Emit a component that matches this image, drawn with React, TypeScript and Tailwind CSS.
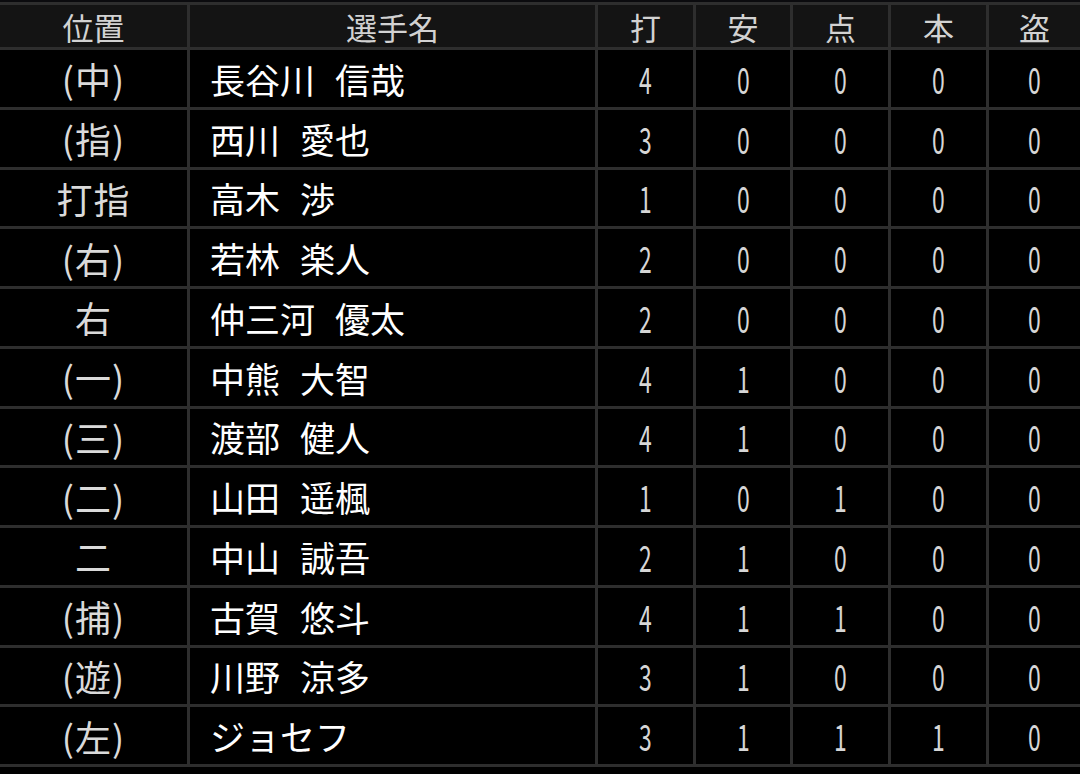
import React from 'react'

type Row = {
  pos: string
  name: string
  ab: number
  h: number
  rbi: number
  hr: number
  sb: number
}

const rows: Row[] = [
  { pos: '(中)', name: '長谷川 信哉', ab: 4, h: 0, rbi: 0, hr: 0, sb: 0 },
  { pos: '(指)', name: '西川 愛也', ab: 3, h: 0, rbi: 0, hr: 0, sb: 0 },
  { pos: '打指', name: '高木 渉', ab: 1, h: 0, rbi: 0, hr: 0, sb: 0 },
  { pos: '(右)', name: '若林 楽人', ab: 2, h: 0, rbi: 0, hr: 0, sb: 0 },
  { pos: '右', name: '仲三河 優太', ab: 2, h: 0, rbi: 0, hr: 0, sb: 0 },
  { pos: '(一)', name: '中熊 大智', ab: 4, h: 1, rbi: 0, hr: 0, sb: 0 },
  { pos: '(三)', name: '渡部 健人', ab: 4, h: 1, rbi: 0, hr: 0, sb: 0 },
  { pos: '(二)', name: '山田 遥楓', ab: 1, h: 0, rbi: 1, hr: 0, sb: 0 },
  { pos: '二', name: '中山 誠吾', ab: 2, h: 1, rbi: 0, hr: 0, sb: 0 },
  { pos: '(捕)', name: '古賀 悠斗', ab: 4, h: 1, rbi: 1, hr: 0, sb: 0 },
  { pos: '(遊)', name: '川野 涼多', ab: 3, h: 1, rbi: 0, hr: 0, sb: 0 },
  { pos: '(左)', name: 'ジョセフ', ab: 3, h: 1, rbi: 1, hr: 1, sb: 0 },
]

const headers = ['位置', '選手名', '打', '安', '点', '本', '盗']

function Num({ v }: { v: number }) {
  return (
    <div className="bg-black flex items-center justify-center">
      <span className="inline-block scale-x-[0.62] text-[37px] leading-none text-[#d6d6d6]">{v}</span>
    </div>
  )
}

export default function App() {
  return (
    <div
      className="w-[1080px] h-[774px] bg-black overflow-hidden"
      style={{ fontFamily: '"Noto Sans CJK JP", "Noto Sans", sans-serif' }}
    >
      <div className="h-[2px] bg-[#0b0b0e]"></div>
      <div className="grid grid-cols-[187px_405px_95px_94px_95px_95px_1fr] grid-rows-[42px_repeat(12,56.75px)] gap-[3px] bg-[#2e2e2e] py-[3px]">
        {headers.map((h) => (
          <div key={h} className="bg-[#141414] flex items-center justify-center text-[31px] leading-none text-[#d2d2d2]">
            {h}
          </div>
        ))}
        {rows.map((r, i) => (
          <React.Fragment key={i}>
            <div className="bg-black flex items-center justify-center text-[36px] tracking-[1px] leading-none text-[#dadada]">
              {r.pos}
            </div>
            <div className="bg-black flex items-center gap-[20px] pl-[20px] text-[35px] leading-none text-white">
              {r.name.split(' ').map((part, j) => (
                <span key={j}>{part}</span>
              ))}
            </div>
            <Num v={r.ab} />
            <Num v={r.h} />
            <Num v={r.rbi} />
            <Num v={r.hr} />
            <Num v={r.sb} />
          </React.Fragment>
        ))}
      </div>
    </div>
  )
}
